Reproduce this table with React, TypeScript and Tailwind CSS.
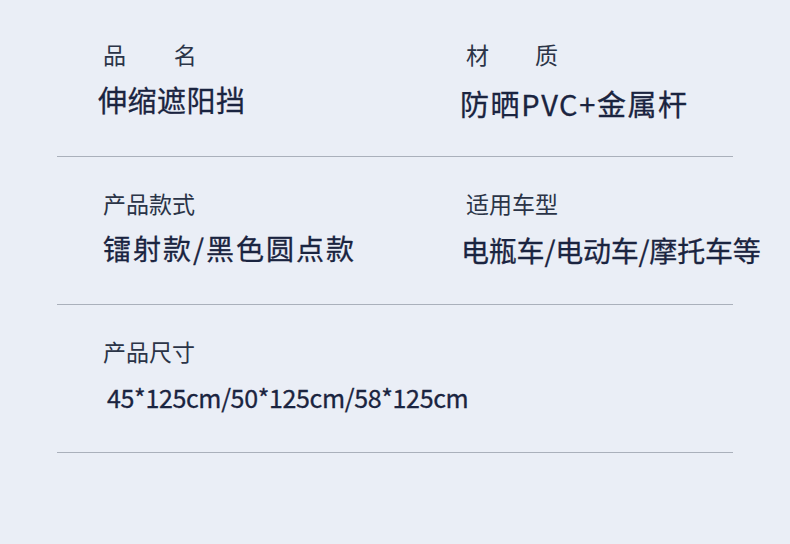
import React from 'react';

const font = { fontFamily: '"Noto Sans CJK SC", "Noto Sans", sans-serif' };

type Cell = { label: string; value: string; valueClass?: string; labelClass?: string };

function Field({ label, value, valueClass = 'text-[28px]', labelClass = '' }: Cell) {
  return (
    <div className="flex flex-col">
      <div className={`text-[23px] leading-[30px] text-[#2b3447] whitespace-pre ${labelClass}`}>{label}</div>
      <div className={`leading-[40px] text-[#1a2440] whitespace-nowrap [-webkit-text-stroke:0.3px_#1a2440] ${valueClass}`}>{value}</div>
    </div>
  );
}

export default function App() {
  return (
    <div className="w-[790px] h-[544px] bg-[#eaeef6] overflow-hidden" style={font}>
      <div className="mx-[57px]">
        {/* row 1 */}
        <div className="pt-[39px] pb-[33px] border-b border-[#aab0bb] flex">
          <div className="w-[404px] shrink-0 pl-[46px]">
            <Field label={'品\u3000\u3000名'} value="伸缩遮阳挡" labelClass="tracking-[0.6px]" valueClass="mt-[10px] -ml-[5px] text-[29px] tracking-[0.5px]" />
          </div>
          <div className="pl-[1px]">
            <Field label={'材\u3000\u3000质'} value="防晒PVC+金属杆" labelClass="pl-[4px]" valueClass="-ml-[2px] mt-[14px] text-[29px] tracking-[1.6px]" />
          </div>
        </div>
        {/* row 2 */}
        <div className="pt-[31px] pb-[34px] border-b border-[#aab0bb] flex">
          <div className="w-[404px] shrink-0 pl-[46px]">
            <Field label="产品款式" value="镭射款/黑色圆点款" valueClass="mt-[10px] text-[28px] tracking-[2px]" />
          </div>
          <div className="pl-[1px]">
            <Field label="适用车型" value="电瓶车/电动车/摩托车等" labelClass="pl-[4px]" valueClass="-ml-[1px] mt-[12px] text-[28px] tracking-[-0.2px]" />
          </div>
        </div>
        {/* row 3 */}
        <div className="pt-[31px] pb-[35px] border-b border-[#aab0bb] flex">
          <div className="pl-[46px]">
            <Field label="产品尺寸" value="45*125cm/50*125cm/58*125cm" valueClass="pl-[4px] mt-[11px] text-[25px] tracking-[-0.35px]" />
          </div>
        </div>
      </div>
    </div>
  );
}
